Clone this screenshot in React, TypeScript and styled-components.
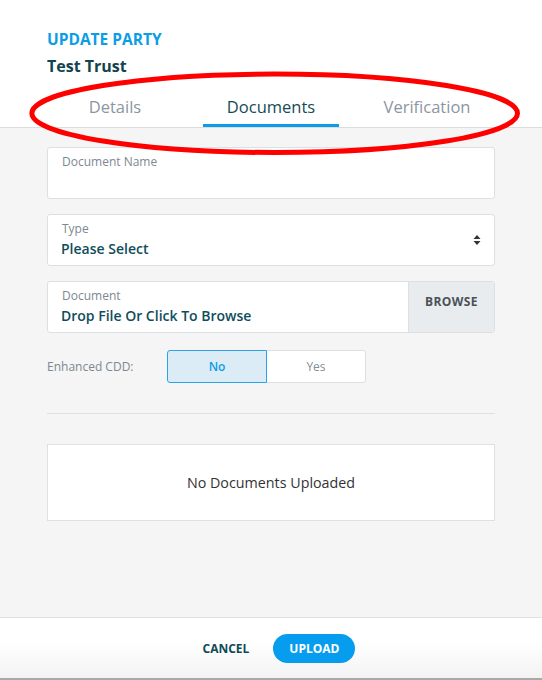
import React, { useState } from "react";
import styled, { createGlobalStyle } from "styled-components";

const Global = createGlobalStyle`
  html, body { margin: 0; padding: 0; background: #fff; }
  body { font-family: "Open Sans", "Noto Sans", sans-serif; -webkit-font-smoothing: antialiased; }
  * { box-sizing: border-box; }
`;

const BLUE = "#0b9de6";
const TEAL = "#0f4a57";

const Page = styled.div`
  position: relative;
  width: 542px;
  height: 680px;
  display: flex;
  flex-direction: column;
  overflow: hidden;
  background: #fff;
`;

const Header = styled.header`
  padding: 29px 47px 0;
  border-bottom: 1px solid #dcdcdc;
  background: #fff;
`;

const Kicker = styled.div`
  font-size: 15.5px;
  line-height: 21px;
  font-weight: 700;
  color: ${BLUE};
`;

const Title = styled.div`
  margin-top: 5px;
  font-size: 16px;
  line-height: 22px;
  font-weight: 700;
  color: #12434f;
`;

const Tabs = styled.nav`
  margin-top: 13px;
  display: grid;
  grid-template-columns: repeat(3, 1fr);
  column-gap: 20px;
`;

const Tab = styled.div<{ $active?: boolean }>`
  padding: 6px 0 6px;
  text-align: center;
  font-size: 16.5px;
  line-height: 22px;
  color: ${(p) => (p.$active ? "#154b57" : "#8c969f")};
  border-bottom: 3px solid ${(p) => (p.$active ? BLUE : "transparent")};
`;

const Body = styled.main`
  flex: 1;
  background: #f5f5f5;
  padding: 19px 47px 0;
  display: flex;
  flex-direction: column;
`;

const Field = styled.div`
  height: 52px;
  margin-bottom: 15px;
  background: #fff;
  border: 1px solid #dde0e3;
  border-radius: 3px;
  display: flex;
  align-items: stretch;
  overflow: hidden;
`;

const FieldMain = styled.div`
  flex: 1;
  padding: 6px 14px 0;
  display: flex;
  flex-direction: column;
`;

const Label = styled.div`
  font-size: 12px;
  line-height: 16px;
  color: #7d8891;
`;

const Value = styled.div`
  margin-top: 2px;
  font-size: 14px;
  line-height: 20px;
  font-weight: 600;
  color: #0f4d5c;
  margin-left: -1px;
`;

const SelectRow = styled.div`
  flex: 1;
  display: flex;
  align-items: center;
  padding: 0 13px 0 14px;
`;

const SelectText = styled.div`
  flex: 1;
  display: flex;
  flex-direction: column;
  align-self: stretch;
  padding-top: 6px;
`;

const Browse = styled.div`
  width: 86px;
  background: #e9ecef;
  border-left: 1px solid #dde0e3;
  display: flex;
  justify-content: center;
  padding-top: 12px;
  font-size: 12px;
  line-height: 16px;
  font-weight: 700;
  letter-spacing: 0.4px;
  color: #4b5157;
`;

const CddRow = styled.div`
  margin-top: 2px;
  display: flex;
  align-items: center;
`;

const CddLabel = styled.div`
  width: 120px;
  font-size: 12px;
  color: #7d8891;
`;

const Segmented = styled.div`
  display: flex;
  width: 199px;
  height: 33px;
  border-radius: 3px;
  background: #fff;
`;

const Segment = styled.button<{ $on?: boolean; $side: "l" | "r" }>`
  flex: 1;
  margin: 0;
  font-family: inherit;
  font-size: 12px;
  font-weight: ${(p) => (p.$on ? 600 : 400)};
  color: ${(p) => (p.$on ? BLUE : "#858d94")};
  background: ${(p) => (p.$on ? "#dcecf6" : "#fff")};
  border: 1px solid ${(p) => (p.$on ? "#2aa2e6" : "#dde0e3")};
  ${(p) => (p.$side === "l" ? "border-radius: 3px 0 0 3px;" : "border-radius: 0 3px 3px 0; border-left: none;")}
  padding: 0;
  cursor: pointer;
`;

const Divider = styled.hr`
  margin: 30px 0 0;
  border: none;
  border-top: 1px solid #e1e1e1;
  height: 0;
`;

const EmptyBox = styled.div`
  margin-top: 30px;
  height: 77px;
  background: #fff;
  border: 1px solid #dde1e5;
  display: flex;
  align-items: center;
  justify-content: center;
  font-size: 14.3px;
  color: #333;
`;

const Footer = styled.footer`
  height: 63px;
  border-top: 1px solid #e2e2e2;
  border-bottom: 2px solid #a9a9a9;
  background: linear-gradient(#ffffff 40%, #f3f3f3);
  display: flex;
  justify-content: center;
  align-items: center;
  gap: 8px;
`;

const Btn = styled.button<{ $primary?: boolean }>`
  height: 29px;
  padding: 0 16px;
  border: none;
  border-radius: 15px;
  font-family: inherit;
  font-size: 12px;
  font-weight: 700;
  color: ${(p) => (p.$primary ? "#fff" : TEAL)};
  background: ${(p) => (p.$primary ? "#069def" : "transparent")};
  cursor: pointer;
`;

const Overlay = styled.svg`
  position: absolute;
  left: 0;
  top: 0;
  pointer-events: none;
`;

const SortIcon = () => (
  <svg width="8" height="12" viewBox="0 0 8 12">
    <path d="M4 1 L7.5 5 H0.5 Z" fill="#333" />
    <path d="M4 11 L7.5 7 H0.5 Z" fill="#333" />
  </svg>
);

export default function App() {
  const [cdd, setCdd] = useState<"no" | "yes">("no");
  return (
    <>
      <Global />
      <Page>
        <Header>
          <Kicker>UPDATE PARTY</Kicker>
          <Title>Test Trust</Title>
          <Tabs>
            <Tab>Details</Tab>
            <Tab $active>Documents</Tab>
            <Tab>Verification</Tab>
          </Tabs>
        </Header>
        <Body>
          <Field>
            <FieldMain>
              <Label>Document Name</Label>
            </FieldMain>
          </Field>
          <Field>
            <SelectRow>
              <SelectText>
                <Label>Type</Label>
                <Value>Please Select</Value>
              </SelectText>
              <SortIcon />
            </SelectRow>
          </Field>
          <Field>
            <FieldMain>
              <Label>Document</Label>
              <Value>Drop File Or Click To Browse</Value>
            </FieldMain>
            <Browse>BROWSE</Browse>
          </Field>
          <CddRow>
            <CddLabel>Enhanced CDD:</CddLabel>
            <Segmented>
              <Segment $side="l" $on={cdd === "no"} onClick={() => setCdd("no")}>No</Segment>
              <Segment $side="r" $on={cdd === "yes"} onClick={() => setCdd("yes")}>Yes</Segment>
            </Segmented>
          </CddRow>
          <Divider />
          <EmptyBox>No Documents Uploaded</EmptyBox>
        </Body>
        <Footer>
          <Btn>CANCEL</Btn>
          <Btn $primary>UPLOAD</Btn>
        </Footer>
        <Overlay width="542" height="680" viewBox="0 0 542 680">
          <ellipse cx="274.7" cy="113.3" rx="242.8" ry="39.2" fill="none" stroke="#ff0000" strokeWidth="5" />
        </Overlay>
      </Page>
    </>
  );
}
